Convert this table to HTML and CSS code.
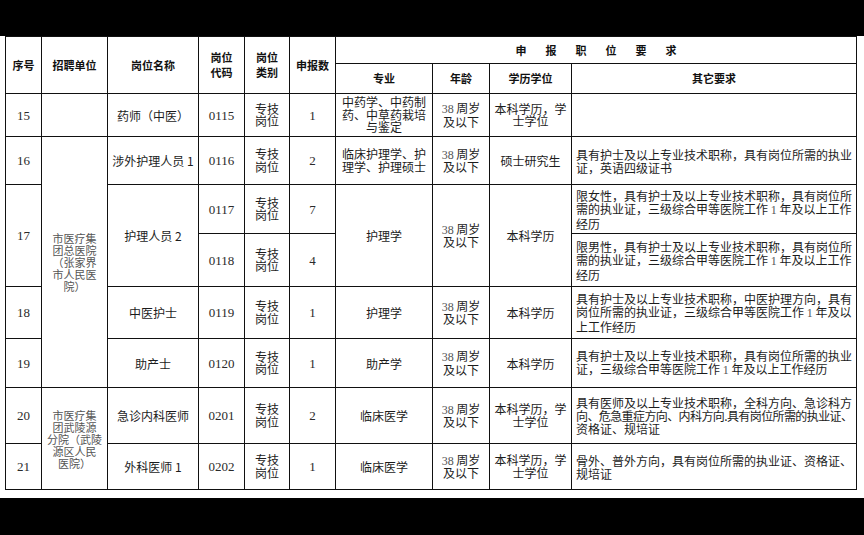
FILE: index.html
```html
<!DOCTYPE html>
<html lang="zh-CN">
<head>
<meta charset="utf-8">
<title>申报职位要求</title>
<link rel="stylesheet" href="styles.css">
</head>
<body>
<div class="band band-top"></div>
<div class="sheet">
<table class="grid">
<colgroup>
<col class="c-no"><col class="c-unit"><col class="c-name"><col class="c-code"><col class="c-type"><col class="c-num"><col class="c-major"><col class="c-age"><col class="c-edu"><col class="c-other">
</colgroup>
<thead>
<tr class="h1">
<th rowspan="2">序号</th>
<th rowspan="2">招聘单位</th>
<th rowspan="2">岗位名称</th>
<th rowspan="2" class="two">岗位<br>代码</th>
<th rowspan="2" class="two">岗位<br>类别</th>
<th rowspan="2">申报数</th>
<th colspan="4" class="spread">申报职位要求</th>
</tr>
<tr class="h2">
<th>专业</th><th>年龄</th><th>学历学位</th><th>其它要求</th>
</tr>
</thead>
<tbody>
<tr class="r15">
<td class="num">15</td>
<td></td>
<td>药师（中医）</td>
<td class="num">0115</td>
<td class="stack">专技<br>岗位</td>
<td class="num">1</td>
<td class="tight">中药学、中药制<br>药、中草药栽培<br>与鉴定</td>
<td class="stack"><span class="n">38</span> 周岁<br>及以下</td>
<td class="stack">本科学历，学<br>士学位</td>
<td class="other"></td>
</tr>
<tr class="r16">
<td class="num">16</td>
<td rowspan="5" class="unit">市医疗集<br>团总医院<br>（张家界<br>市人民医<br>院）</td>
<td>涉外护理人员 1</td>
<td class="num">0116</td>
<td class="stack">专技<br>岗位</td>
<td class="num">2</td>
<td class="tight">临床护理学、护<br>理学、护理硕士</td>
<td class="stack"><span class="n">38</span> 周岁<br>及以下</td>
<td>硕士研究生</td>
<td class="other">具有护士及以上专业技术职称，具有岗位所需的执业<br>证，英语四级证书</td>
</tr>
<tr class="r17a">
<td class="num" rowspan="2">17</td>
<td rowspan="2">护理人员 2</td>
<td class="num">0117</td>
<td class="stack">专技<br>岗位</td>
<td class="num">7</td>
<td rowspan="2">护理学</td>
<td rowspan="2" class="stack"><span class="n">38</span> 周岁<br>及以下</td>
<td rowspan="2">本科学历</td>
<td class="other">限女性，具有护士及以上专业技术职称，具有岗位所<br>需的执业证，三级综合甲等医院工作 <span class="n">1</span> 年及以上工作<br>经历</td>
</tr>
<tr class="r17b">
<td class="num">0118</td>
<td class="stack">专技<br>岗位</td>
<td class="num">4</td>
<td class="other">限男性，具有护士及以上专业技术职称，具有岗位所<br>需的执业证，三级综合甲等医院工作 <span class="n">1</span> 年及以上工作<br>经历</td>
</tr>
<tr class="r18">
<td class="num">18</td>
<td>中医护士</td>
<td class="num">0119</td>
<td class="stack">专技<br>岗位</td>
<td class="num">1</td>
<td>护理学</td>
<td class="stack"><span class="n">38</span> 周岁<br>及以下</td>
<td>本科学历</td>
<td class="other">具有护士及以上专业技术职称，中医护理方向，具有<br>岗位所需的执业证，三级综合甲等医院工作 <span class="n">1</span> 年及以<br>上工作经历</td>
</tr>
<tr class="r19">
<td class="num">19</td>
<td>助产士</td>
<td class="num">0120</td>
<td class="stack">专技<br>岗位</td>
<td class="num">1</td>
<td>助产学</td>
<td class="stack"><span class="n">38</span> 周岁<br>及以下</td>
<td>本科学历</td>
<td class="other">具有护士及以上专业技术职称，具有岗位所需的执业<br>证，三级综合甲等医院工作 <span class="n">1</span> 年及以上工作经历</td>
</tr>
<tr class="r20">
<td class="num">20</td>
<td rowspan="2" class="unit">市医疗集<br>团武陵源<br>分院（武陵<br>源区人民<br>医院）</td>
<td>急诊内科医师</td>
<td class="num">0201</td>
<td class="stack">专技<br>岗位</td>
<td class="num">2</td>
<td>临床医学</td>
<td class="stack"><span class="n">38</span> 周岁<br>及以下</td>
<td class="stack">本科学历，学<br>士学位</td>
<td class="other">具有医师及以上专业技术职称，全科方向、急诊科方<br><span class="squeeze">向、危急重症方向、内科方向.具有岗位所需的执业证、</span><br>资格证、规培证</td>
</tr>
<tr class="r21">
<td class="num">21</td>
<td>外科医师 1</td>
<td class="num">0202</td>
<td class="stack">专技<br>岗位</td>
<td class="num">1</td>
<td>临床医学</td>
<td class="stack"><span class="n">38</span> 周岁<br>及以下</td>
<td class="stack">本科学历，学<br>士学位</td>
<td class="other">骨外、普外方向，具有岗位所需的执业证、资格证、<br>规培证</td>
</tr>
</tbody>
</table>
</div>
<div class="band band-bottom"></div>
</body>
</html>
```

FILE: styles.css
```css
html, body {
  margin: 0;
  padding: 0;
}

body {
  width: 864px;
  height: 535px;
  overflow: hidden;
  background: #fff;
  font-family: "Noto Sans CJK SC", "Noto Sans", sans-serif;
  color: #1c1c1c;
}

.band {
  background: #000;
}

.band-top {
  height: 36px;
}

.band-bottom {
  height: 37px;
}

.sheet {
  height: 462px;
  padding-left: 5px;
  box-sizing: border-box;
}

.grid {
  border-collapse: collapse;
  table-layout: fixed;
  width: 852px;
}

.c-no { width: 36px; }
.c-unit { width: 66px; }
.c-name { width: 91px; }
.c-code { width: 46px; }
.c-type { width: 45px; }
.c-num { width: 46px; }
.c-major { width: 97px; }
.c-age { width: 57px; }
.c-edu { width: 82px; }
.c-other { width: 285px; }

.grid th,
.grid td {
  border: 1px solid #111;
  padding: 0 2px;
  text-align: center;
  vertical-align: middle;
  font-size: 12px;
  line-height: 13px;
  white-space: nowrap;
  overflow: hidden;
}

.grid th {
  font-size: 11px;
  font-weight: 700;
  line-height: 15px;
  color: #111;
}

.grid th.spread {
  letter-spacing: 19px;
  text-indent: 19px;
}

.h1 { height: 27px; }
.h2 { height: 30px; }
.r15 { height: 43px; }
.r16 { height: 48px; }
.r17a { height: 49px; }
.r17b { height: 53px; }
.r18 { height: 52px; }
.r19 { height: 49px; }
.r20 { height: 56px; }
.r21 { height: 46px; }

.grid td.num {
  font-family: "Liberation Serif", "Times New Roman", serif;
  font-size: 13px;
  color: #2a2a2a;
}

.grid td.stack {
  line-height: 12.5px;
}

.grid td.tight {
  line-height: 12.5px;
}

.grid td.unit {
  font-size: 11px;
  line-height: 12px;
  color: #555;
  padding: 0 1px;
}

.grid td.other {
  text-align: left;
  padding: 0 2px 0 4px;
}

.squeeze {
  letter-spacing: -0.6px;
}

.n {
  font-family: "Liberation Serif", "Times New Roman", serif;
  font-size: 12px;
  color: #555;
}
```
